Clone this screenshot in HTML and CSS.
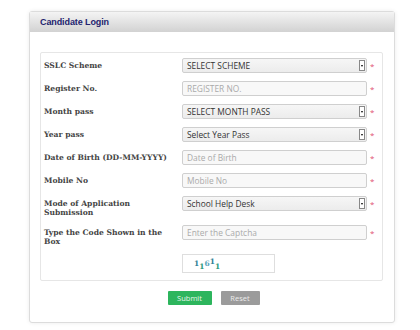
FILE: index.html
```html
<!DOCTYPE html>
<html lang="en">
<head>
  <meta charset="UTF-8" />
  <title>Candidate Login</title>
  <link rel="stylesheet" href="styles.css">
</head>
<body>
  <div class="page">
    <div class="panel">
      <div class="panel-head">Candidate Login</div>
      <div class="panel-body">
        <div class="fieldset">
          <div class="form-grid">
            <div class="label">SSLC Scheme</div>
            <div class="select"><span>SELECT SCHEME</span><i class="arrow"></i></div>
            <div class="star">*</div>

            <div class="label">Register No.</div>
            <div class="input placeholder">REGISTER NO.</div>
            <div class="star">*</div>

            <div class="label">Month pass</div>
            <div class="select"><span>SELECT MONTH PASS</span><i class="arrow"></i></div>
            <div class="star">*</div>

            <div class="label">Year pass</div>
            <div class="select"><span>Select Year Pass</span><i class="arrow"></i></div>
            <div class="star">*</div>

            <div class="label">Date of Birth (DD-MM-YYYY)</div>
            <div class="input placeholder">Date of Birth</div>
            <div class="star">*</div>

            <div class="label">Mobile No</div>
            <div class="input placeholder">Mobile No</div>
            <div class="star">*</div>

            <div class="label">Mode of Application Submission</div>
            <div class="select"><span>School Help Desk</span><i class="arrow"></i></div>
            <div class="star">*</div>

            <div class="label">Type the Code Shown in the Box</div>
            <div class="input placeholder">Enter the Captcha</div>
            <div class="star">*</div>

            <div></div>
            <div class="captcha">
              <span class="c1">1</span><span class="c2 sub">1</span><span class="c3">6</span><span class="c1 sup">1</span><span class="c2 sub">1</span>
            </div>
            <div></div>
          </div>
        </div>
        <div class="buttons">
          <button class="btn btn-submit">Submit</button>
          <button class="btn btn-reset">Reset</button>
        </div>
      </div>
    </div>
  </div>
</body>
</html>
```
FILE: styles.css
```css
* {
  box-sizing: border-box;
  margin: 0;
  padding: 0;
}

body {
  width: 420px;
  height: 330px;
  background: #fff;
  font-family: "Open Sans", Arial, sans-serif;
  overflow: hidden;
}

.page {
  padding: 11px 25px 0 29px;
}

.panel {
  width: 366px;
  height: 312px;
  border: 1px solid #dcdcdc;
  border-radius: 3px;
  background: #fff;
  box-shadow: 0 0 4px rgba(0, 0, 0, 0.08);
}

.panel-head {
  height: 20px;
  padding-left: 10px;
  display: flex;
  align-items: center;
  background: linear-gradient(to bottom, #f4f4f4, #d2d2d2);
  color: #23236e;
  font-family: "Liberation Sans", Arial, sans-serif;
  font-weight: bold;
  font-size: 9px;
  letter-spacing: -0.1px;
}

.panel-body {
  padding: 20px 11px 0 10px;
}

.fieldset {
  border: 1px solid #e6e6e6;
  border-radius: 2px;
  padding: 5px 0 7px 3px;
}

.form-grid {
  display: grid;
  grid-template-columns: 138px 185px 12px;
  row-gap: 8px;
  align-items: start;
}

.label {
  font-family: "DejaVu Serif", serif;
  font-weight: bold;
  font-size: 7.6px;
  line-height: 9px;
  color: #444;
  padding-top: 3px;
  padding-right: 10px;
  min-height: 15px;
}

.select,
.input {
  height: 15px;
  display: flex;
  align-items: center;
  font-size: 8.4px;
  padding-left: 4px;
  border: 1px solid #cfcfcf;
  border-radius: 2px;
}

.select {
  background: linear-gradient(to bottom, #f6f6f6, #ececec);
  color: #333;
  justify-content: space-between;
  padding-right: 1px;
}

.input {
  background: #f8f8f8;
}

.placeholder {
  color: #aaa;
}

.arrow {
  width: 6px;
  height: 11px;
  border: 1px solid #888;
  background: #fff;
  display: flex;
  align-items: center;
  justify-content: center;
}

.arrow::after {
  content: "";
  border-left: 1.5px solid transparent;
  border-right: 1.5px solid transparent;
  border-top: 2px solid #000;
}

.star {
  color: #e05070;
  font-size: 8px;
  padding-left: 3px;
  padding-top: 2px;
}

.captcha {
  width: 93px;
  height: 19px;
  border: 1px solid #dedede;
  display: flex;
  align-items: center;
  padding-left: 11px;
  font-family: "DejaVu Serif", serif;
  font-weight: bold;
  font-size: 7.5px;
}

.captcha span {
  position: relative;
}

.c1 { color: #2f7f96; }
.c2 { color: #2a9a7c; }
.c3 { color: #5aa6bc; }

.sub { top: 3px; }
.sup { top: -2px; }

.buttons {
  display: flex;
  justify-content: center;
  gap: 9px;
  padding-top: 10px;
  padding-left: 4px;
}

.btn {
  height: 14px;
  border: none;
  border-radius: 1px;
  font-family: "Open Sans", Arial, sans-serif;
  font-size: 7.5px;
  color: #e8f5ec;
}

.btn-submit {
  width: 44px;
  background: #2db55d;
}

.btn-reset {
  width: 39px;
  background: #9b9b9b;
  color: #ececec;
}
```
